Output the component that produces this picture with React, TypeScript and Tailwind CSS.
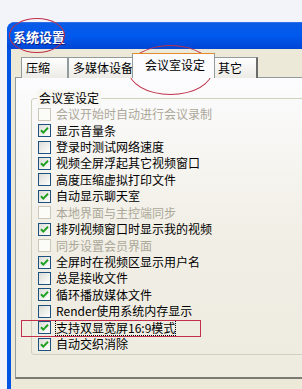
import React from "react";

type Row = { label: string; checked: boolean; disabled?: boolean; focus?: boolean };

const rows: Row[] = [
  { label: "会议开始时自动进行会议录制", checked: false, disabled: true },
  { label: "显示音量条", checked: true },
  { label: "登录时测试网络速度", checked: false },
  { label: "视频全屏浮起其它视频窗口", checked: true },
  { label: "高度压缩虚拟打印文件", checked: false },
  { label: "自动显示聊天室", checked: true },
  { label: "本地界面与主控端同步", checked: false, disabled: true },
  { label: "排列视频窗口时显示我的视频", checked: true },
  { label: "同步设置会员界面", checked: false, disabled: true },
  { label: "全屏时在视频区显示用户名", checked: true },
  { label: "总是接收文件", checked: false },
  { label: "循环播放媒体文件", checked: true },
  { label: "Render使用系统内存显示", checked: false },
  { label: "支持双显宽屏16:9模式", checked: true, focus: true },
  { label: "自动交织消除", checked: true },
];

const CheckBox = ({ checked, disabled }: { checked: boolean; disabled?: boolean }) => (
  <div
    className={
      disabled
        ? "w-[13px] h-[13px] shrink-0 border border-[#cac8bb] bg-[#fbfbf8]"
        : "w-[13px] h-[13px] shrink-0 border border-[#1c5180] bg-gradient-to-br from-[#dcdcd6] to-[#ffffff]"
    }
  >
    {checked && (
      <svg width="11" height="11" viewBox="0 0 11 11">
        <path d="M2 5.2 L4.3 7.6 L9 2.8" fill="none" stroke="#21a121" strokeWidth="2" />
      </svg>
    )}
  </div>
);

const tabs = [
  { label: "压缩", w: "w-[47px]" },
  { label: "多媒体设备", w: "w-[65px]" },
];

export default function App() {
  return (
    <div
      className="relative w-[302px] h-[389px] overflow-hidden bg-[#f3f3fa] pt-[22px] pl-[7px]"
      style={{ fontFamily: '"Noto Sans CJK SC", "Noto Sans", sans-serif' }}
    >
      <div className="flex flex-col w-[320px] h-[380px] rounded-tl-[8px] overflow-hidden bg-[#0054e3]">
        {/* title bar */}
        <div className="h-[27px] shrink-0 flex items-center pl-[6px] bg-gradient-to-b from-[#0a5ce6] via-[#0058ee] to-[#0046d4] border-t border-[#2e6fe8]">
          <span className="text-white text-[13px] font-bold leading-none [text-shadow:1px_1px_0_#0a1f8a]">
            系统设置
          </span>
        </div>
        {/* body */}
        <div className="flex-1 ml-[4px] bg-[#ece9d8] pl-[4px] pt-[4px] flex flex-col">
          {/* tabs */}
          <div className="flex items-end h-[25px] pl-[6px] relative z-10">
            {tabs.map((t) => (
              <div
                key={t.label}
                className={`${t.w} h-[21px] border border-b-0 border-[#919b9c] bg-gradient-to-b from-[#fefefe] to-[#ecebe6] text-[12px] leading-[20px] pl-[4px] whitespace-nowrap text-black`}
              >
                {t.label}
              </div>
            ))}
            <div className="w-[83px] h-[25px] -mx-[1px] border border-b-0 border-[#919b9c] border-t-[#e68b2c] bg-[#fcfcfe] text-[12px] leading-[22px] pl-[12px] whitespace-nowrap text-black">
              会议室设定
            </div>
            <div className="w-[44px] h-[21px] border border-b-0 border-[#919b9c] border-r-[#6b6b6b] border-r-2 bg-gradient-to-b from-[#fefefe] to-[#ecebe6] text-[12px] leading-[20px] pl-[3px] whitespace-nowrap text-black">
              其它
            </div>
          </div>
          {/* panel */}
          <div className="-mt-px h-[302px] border border-[#919b9c] border-b-[#7a7a72] border-b-2 bg-gradient-to-b from-[#fcfcfe] via-[#f1efe6] to-[#eeebe0] pl-[15px] pt-[20px] pr-0">
            <div className="relative h-[257px] border border-[#d0d0bf] rounded-[3px] pl-[6px] pt-[7px]">
              <div className="absolute -top-[9px] left-[5px] px-[2px] bg-[#f7f6f0] text-[12px] leading-[16px] text-black">
                会议室设定
              </div>
              {rows.map((r) => (
                <div key={r.label} className="flex items-center h-[16.43px] gap-[5px]">
                  <CheckBox checked={r.checked} disabled={r.disabled} />
                  <span
                    className={`text-[12px] leading-[14px] whitespace-nowrap ${
                      r.disabled ? "text-[#aca899]" : "text-black"
                    } ${r.focus ? "outline outline-1 outline-dotted outline-black" : ""}`}
                  >
                    {r.label}
                  </span>
                </div>
              ))}
            </div>
          </div>
        </div>
      </div>

      {/* red annotations */}
      <div className="absolute left-[9px] top-[18px] w-[56px] h-[35px] rounded-[50%] border border-[#c0304a]" />
      <div className="absolute left-[128px] top-[45px] w-[85px] h-[50px] rounded-[50%] border border-[#c0304a]" />
      <div className="absolute left-[21px] top-[320px] w-[180px] h-[17px] border border-[#c0304a]" />
    </div>
  );
}
